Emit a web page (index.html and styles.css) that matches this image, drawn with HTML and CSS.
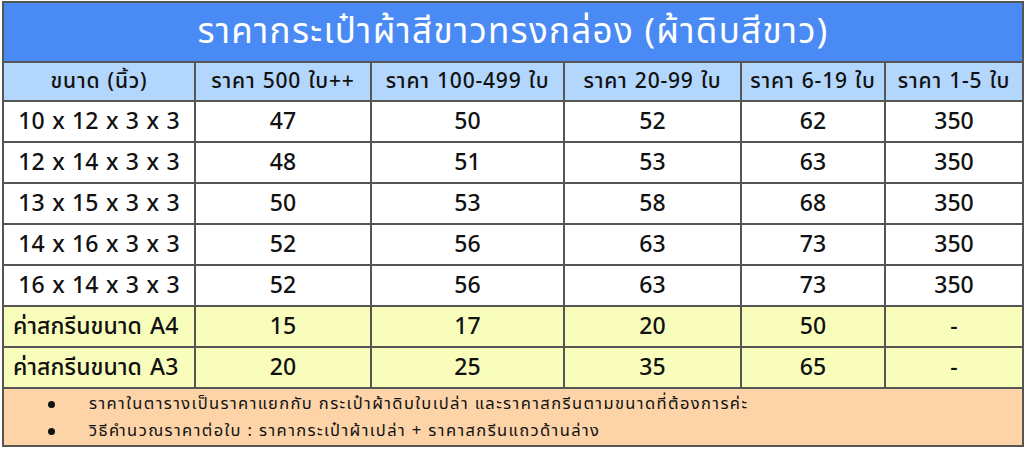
FILE: index.html
```html
<!DOCTYPE html>
<html lang="th">
<head>
<meta charset="utf-8">
<link rel="stylesheet" href="styles.css">
</head>
<body>
<table class="price">
  <colgroup>
    <col class="c1"><col class="c2"><col class="c3"><col class="c4"><col class="c5"><col class="c6">
  </colgroup>
  <tr class="title"><td colspan="6">ราคากระเป๋าผ้าสีขาวทรงกล่อง (ผ้าดิบสีขาว)</td></tr>
  <tr class="head">
    <td>ขนาด (นิ้ว)</td><td>ราคา 500 ใบ++</td><td>ราคา 100-499 ใบ</td><td>ราคา 20-99 ใบ</td><td>ราคา 6-19 ใบ</td><td>ราคา 1-5 ใบ</td>
  </tr>
  <tr class="row"><td>10 x 12 x 3 x 3</td><td>47</td><td>50</td><td>52</td><td>62</td><td>350</td></tr>
  <tr class="row"><td>12 x 14 x 3 x 3</td><td>48</td><td>51</td><td>53</td><td>63</td><td>350</td></tr>
  <tr class="row"><td>13 x 15 x 3 x 3</td><td>50</td><td>53</td><td>58</td><td>68</td><td>350</td></tr>
  <tr class="row"><td>14 x 16 x 3 x 3</td><td>52</td><td>56</td><td>63</td><td>73</td><td>350</td></tr>
  <tr class="row"><td>16 x 14 x 3 x 3</td><td>52</td><td>56</td><td>63</td><td>73</td><td>350</td></tr>
  <tr class="row screen"><td>ค่าสกรีนขนาด A4</td><td>15</td><td>17</td><td>20</td><td>50</td><td>-</td></tr>
  <tr class="row screen"><td>ค่าสกรีนขนาด A3</td><td>20</td><td>25</td><td>35</td><td>65</td><td>-</td></tr>
  <tr class="notes">
    <td colspan="6">
      <ul>
        <li>ราคาในตารางเป็นราคาแยกกับ กระเป๋าผ้าดิบใบเปล่า และราคาสกรีนตามขนาดที่ต้องการค่ะ</li>
        <li>วิธีคำนวณราคาต่อใบ : ราคากระเป๋าผ้าเปล่า + ราคาสกรีนแถวด้านล่าง</li>
      </ul>
    </td>
  </tr>
</table>
</body>
</html>
```
FILE: styles.css
```css
html, body {
  margin: 0;
  padding: 0;
  background: #ffffff;
}
body {
  padding: 1px 2px 0 2px;
  font-family: "Noto Sans Thai", "Noto Sans", sans-serif;
  color: #111;
}
.price {
  width: 1020px;
  border-collapse: collapse;
  table-layout: fixed;
  border: 2px solid #555;
}
.c1 { width: 192px; }
.c2 { width: 176px; }
.c3 { width: 193px; }
.c4 { width: 177px; }
.c5 { width: 144px; }
.c6 { width: 138px; }
.price td {
  border: 2px solid #555;
  text-align: center;
  padding: 0;
  white-space: nowrap;
}
.title td {
  background: #4a8af4;
  color: #fff;
  font-size: 35px;
  letter-spacing: 1.3px;
  height: 58px;
  font-weight: 400;
}
.head td {
  background: #b3d6fc;
  font-size: 21px;
  letter-spacing: 0.8px;
  word-spacing: 1px;
  font-weight: 500;
  height: 37px;
}
.row td {
  background: #fff;
  font-size: 23px;
  font-weight: 500;
  height: 39px;
}
.row td:first-child { word-spacing: 1.5px; }
.screen td { background: #f9fdbb; }
.screen td:first-child {
  text-align: left;
  padding-left: 9px;
  word-spacing: 2px;
  letter-spacing: 0.1px;
}
.notes td {
  background: #fdd3a8;
  text-align: left;
  height: 56px;
  font-size: 16.5px;
  letter-spacing: 1.4px;
}
.notes ul {
  margin: 0;
  padding: 0 0 0 44px;
  list-style: none;
}
.notes li {
  line-height: 27px;
}
.notes li::before {
  content: "";
  display: inline-block;
  width: 7px;
  height: 7px;
  border-radius: 50%;
  background: #111;
  margin-right: 34px;
  vertical-align: middle;
}
```
